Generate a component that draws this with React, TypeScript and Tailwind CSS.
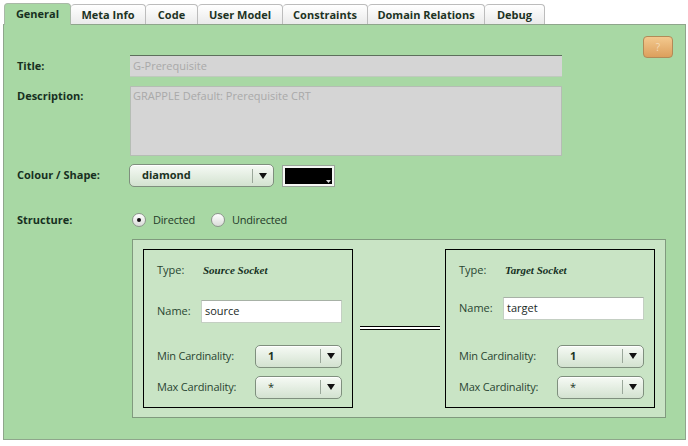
import React from 'react'

const TABS = ['General', 'Meta Info', 'Code', 'User Model', 'Constraints', 'Domain Relations', 'Debug']
const TAB_W = [67, 75, 52, 85, 85, 117, 60]

function Caret() {
  return (
    <svg width="8" height="6" viewBox="0 0 8 6" className="shrink-0">
      <path d="M0 0 H8 L4 6 Z" fill="#111" />
    </svg>
  )
}

function Select({ value, width, bold = true }: { value: string; width: string; bold?: boolean }) {
  return (
    <div
      className={`${width} h-[23px] flex items-center rounded-[5px] border border-[#7f8f7e] bg-gradient-to-b from-[#f6faf5] to-[#d3e2d0] shadow-[inset_0_1px_0_#fff]`}
    >
      <span className={`flex-1 pl-[12px] text-[11px] text-[#1a3323] ${bold ? 'font-bold' : ''}`}>{value}</span>
      <span className="h-[14px] w-px bg-[#9aa79a]" />
      <span className="w-[20px] flex justify-center">
        <Caret />
      </span>
    </div>
  )
}

function Radio({ checked, label }: { checked?: boolean; label: string }) {
  return (
    <label className="flex items-center gap-[7px]">
      <span className="w-[14px] h-[14px] rounded-full border border-[#8d958c] bg-gradient-to-b from-[#ffffff] to-[#d9dcd8] flex items-center justify-center">
        {checked && <span className="w-[4px] h-[4px] rounded-full bg-[#111]" />}
      </span>
      <span className="text-[11px] tracking-[-0.2px] text-[#1f3a28]">{label}</span>
    </label>
  )
}

function Socket({ type, name, namePt }: { type: string; name: string; namePt: string }) {
  return (
    <div className="w-[210px] h-[159px] border border-black flex flex-col pl-[13px] pr-[10px]">
      <div className="flex items-center h-[16px] mt-[13px]">
        <span className="w-[46px] text-[11px] text-[#2a4632]">Type:</span>
        <span className="text-[11px] italic font-bold text-[#15301f] font-['Liberation_Serif',serif]">{type}</span>
      </div>
      <div className={`flex items-center ${namePt}`}>
        <span className="w-[44px] text-[11px] text-[#2a4632]">Name:</span>
        <div className="flex-1 h-[23px] bg-white border border-[#c4cfc3] border-t-[#a7b1a6] flex items-center pl-[3px] text-[11px] text-[#1a2a1f]">
          {name}
        </div>
      </div>
      <div className="flex items-center mt-[auto] mb-[8px]">
        <span className="w-[98px] text-[11px] tracking-[-0.2px] text-[#2a4632]">Min Cardinality:</span>
        <Select value="1" width="w-[87px]" />
      </div>
      <div className="flex items-center mb-[8px]">
        <span className="w-[98px] text-[11px] tracking-[-0.2px] text-[#2a4632]">Max Cardinality:</span>
        <Select value="*" width="w-[87px]" bold={false} />
      </div>
    </div>
  )
}

export default function App() {
  return (
    <div className="w-[688px] h-[446px] bg-white font-['Open_Sans',sans-serif] overflow-hidden">
      {/* Tabs */}
      <div className="flex pl-[4px] pt-[3px] h-[25px]">
        {TABS.map((t, i) => (
          <div
            key={t}
            style={{ width: TAB_W[i] }}
            className={
              i === 0
                ? 'relative z-10 h-[22px] flex items-center justify-center rounded-t-[4px] border border-b-0 border-[#a9b9a7] bg-[#a8d8a4] text-[11px] font-bold text-[#17301f]'
                : 'mt-[1px] h-[21px] flex items-center justify-center rounded-t-[4px] border border-b-0 border-l-0 border-[#bcbcbc] bg-gradient-to-b from-[#ffffff] to-[#e9e9e9] text-[11px] font-bold text-[#1d3324]'
            }
          >
            {t}
          </div>
        ))}
      </div>

      {/* Panel */}
      <div className="relative -mt-[1px] ml-[3px] w-[683px] h-[416px] bg-[#a8d8a4] border border-[#8fa68c] pl-[13px] pt-[30px]">
        <button className="absolute left-[639px] top-[11px] w-[30px] h-[22px] rounded-[4px] border border-[#b28a57] bg-gradient-to-b from-[#f3c98e] to-[#dc9f5c] text-[10px] text-[#f4dcbb] flex items-center justify-center">
          ?
        </button>

        <div className="flex items-center">
          <span className="w-[113px] text-[11px] font-bold text-[#17301f]">Title:</span>
          <div className="w-[432px] h-[22px] bg-[#d5d5d5] border-t border-t-[#5d6f5c] border-b border-b-[#bfcabd] flex items-center pl-[3px] text-[11px] text-[#a9a9a9]">
            G-Prerequisite
          </div>
        </div>

        <div className="flex items-start mt-[9px]">
          <span className="w-[113px] pt-[2px] text-[11px] font-bold text-[#17301f]">Description:</span>
          <div className="w-[432px] h-[70px] bg-[#d5d5d5] border border-[#b5bdb4] pl-[2px] pt-[1px] text-[11px] text-[#a9a9a9]">
            GRAPPLE Default: Prerequisite CRT
          </div>
        </div>

        <div className="flex items-center mt-[8px]">
          <span className="w-[112px] text-[11px] font-bold text-[#17301f]">Colour / Shape:</span>
          <Select value="diamond" width="w-[145px]" />
          <div className="relative ml-[9px] w-[51px] h-[20px] bg-black border-2 border-[#f4f7f3] shadow-[0_0_0_1px_#9aa69a]">
            <svg width="5" height="3" viewBox="0 0 5 3" className="absolute right-[1px] bottom-[1px]">
              <path d="M0 0 H5 L2.5 3 Z" fill="#ddd" />
            </svg>
          </div>
        </div>

        <div className="flex items-center mt-[25px]">
          <span className="w-[115px] text-[11px] font-bold text-[#17301f]">Structure:</span>
          <div className="flex items-center gap-[16px]">
            <Radio checked label="Directed" />
            <Radio label="Undirected" />
          </div>
        </div>

        <div className="ml-[115px] mt-[10px] w-[534px] h-[179px] bg-[#c9e4c5] border border-[#809a7e] flex items-center pl-[10px]">
          <Socket type="Source Socket" name="source" namePt="mt-[21px]" />
          <div className="w-[80px] ml-[7px] mr-[5px] h-[4px] border-y border-black bg-white" />
          <Socket type="Target Socket" name="target" namePt="mt-[18px]" />
        </div>
      </div>
    </div>
  )
}
